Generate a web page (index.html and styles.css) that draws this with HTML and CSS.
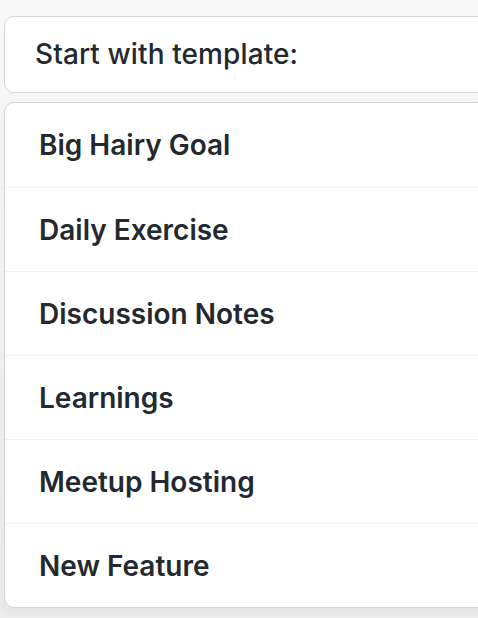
FILE: index.html
```html
<!DOCTYPE html>
<html>
<head>
<meta charset="utf-8">
<link rel="stylesheet" href="styles.css">
</head>
<body>
<div class="page">
  <div class="input">Start with template:</div>
  <ul class="menu">
    <li class="item">Big Hairy Goal</li>
    <li class="item">Daily Exercise</li>
    <li class="item">Discussion Notes</li>
    <li class="item">Learnings</li>
    <li class="item">Meetup Hosting</li>
    <li class="item">New Feature</li>
  </ul>
</div>
</body>
</html>
```
FILE: styles.css
```css
html, body {
  margin: 0;
  padding: 0;
  height: 100%;
}
body {
  background: linear-gradient(#f8f8f8, #ececec);
  font-family: Inter, "Noto Sans", sans-serif;
  color: #24292f;
  overflow: hidden;
}
.page {
  padding: 16px 0 0 4px;
  width: 520px;
  display: flex;
  flex-direction: column;
  gap: 9px;
}
.input {
  box-sizing: border-box;
  height: 77px;
  border: 1.5px solid #d0d5dc;
  border-radius: 10px;
  background: #fff;
  display: flex;
  align-items: center;
  padding-left: 30px;
  font-size: 28px;
  font-weight: 500;
  padding-bottom: 2px;
  letter-spacing: 0.1px;
}
.menu {
  list-style: none;
  margin: 0;
  padding: 0;
  border: 1.5px solid #d0d5dc;
  border-radius: 10px;
  background: #fff;
  box-shadow: 0 4px 10px rgba(0,0,0,0.04);
}
.item {
  height: 84px;
  box-sizing: border-box;
  display: flex;
  align-items: center;
  padding-left: 34px;
  font-size: 28px;
  font-weight: 600;
  border-top: 1.5px solid #f2f2f3;
}
.item:first-child {
  border-top: none;
}
```
